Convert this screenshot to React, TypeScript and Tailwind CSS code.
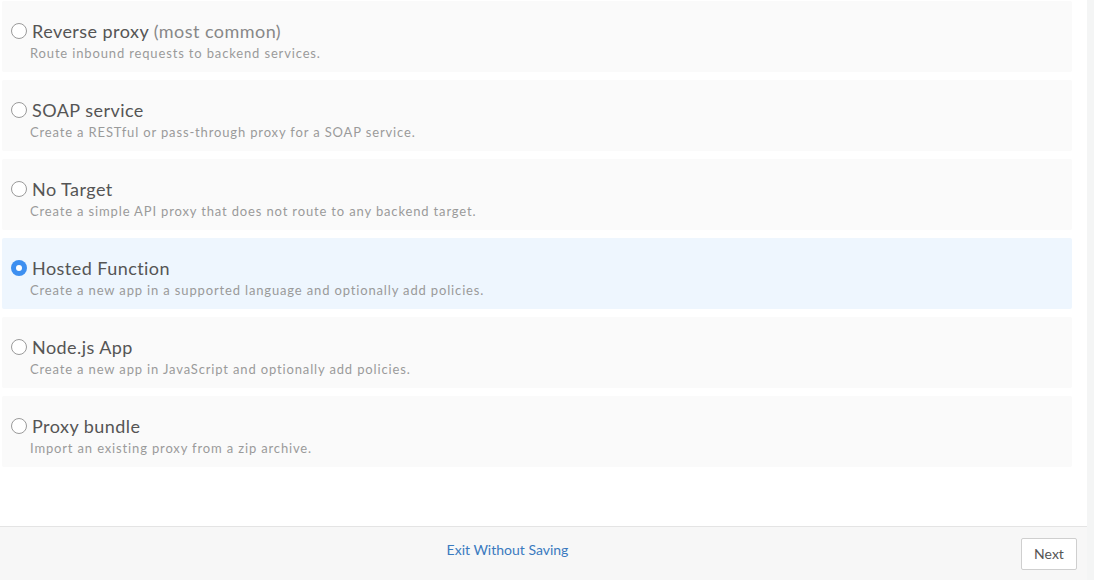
const options = [
  {
    id: "reverse",
    title: "Reverse proxy",
    note: "(most common)",
    description: "Route inbound requests to backend services.",
  },
  {
    id: "soap",
    title: "SOAP service",
    description: "Create a RESTful or pass-through proxy for a SOAP service.",
  },
  {
    id: "notarget",
    title: "No Target",
    description: "Create a simple API proxy that does not route to any backend target.",
  },
  {
    id: "hosted",
    title: "Hosted Function",
    description: "Create a new app in a supported language and optionally add policies.",
  },
  {
    id: "node",
    title: "Node.js App",
    description: "Create a new app in JavaScript and optionally add policies.",
  },
  {
    id: "bundle",
    title: "Proxy bundle",
    description: "Import an existing proxy from a zip archive.",
  },
];

const Radio = ({ checked }: { checked: boolean }) =>
  checked ? (
    <span className="flex h-4 w-4 shrink-0 items-center justify-center rounded-full bg-[#3d8ff0]">
      <span className="h-[6px] w-[6px] rounded-full bg-white" />
    </span>
  ) : (
    <span className="h-4 w-4 shrink-0 rounded-full border border-[#9a9a9a] bg-white" />
  );

const App = () => {
  const selected = "hosted";

  return (
    <div className="flex h-[580px] w-[1094px] bg-white font-['Lato',sans-serif]">
      <div className="flex w-[1087px] flex-col">
        <main className="flex h-[526px] flex-col gap-2 pl-[2px] pr-[15px] pt-px">
          {options.map((o) => {
            const active = o.id === selected;
            return (
              <div
                key={o.id}
                className={`flex h-[71px] flex-col rounded-[2px] pl-[9px] pt-[19px] ${
                  active ? "bg-[#eef6fe]" : "bg-[#fafafa]"
                }`}
              >
                <div className="flex h-[22px] items-center gap-[5px]">
                  <Radio checked={active} />
                  <span className="text-[18px] leading-[22px] tracking-[0.45px] text-[#555]">
                    {o.title}
                    {o.note && (
                      <span className="text-[#888]"> {o.note}</span>
                    )}
                  </span>
                </div>
                <p className="pl-[19px] pt-[2px] text-[13px] leading-[18px] tracking-[0.85px] text-[#9a9a9a]">
                  {o.description}
                </p>
              </div>
            );
          })}
        </main>
        <footer className="flex flex-1 items-center border-t border-[#e4e4e4] bg-[#f7f7f7] pr-[10px]">
          <div className="flex flex-1 justify-center">
            <a className="mb-2 mr-[6px] cursor-pointer text-[14px] text-[#3a7abf]">
              Exit Without Saving
            </a>
          </div>
          <button className="h-8 w-14 rounded-[2px] border border-[#cfcfcf] bg-white text-[14px] text-[#555]">
            Next
          </button>
        </footer>
      </div>
      <div className="w-[7px] bg-[#f4f5f5]" />
    </div>
  );
};

export default App;
